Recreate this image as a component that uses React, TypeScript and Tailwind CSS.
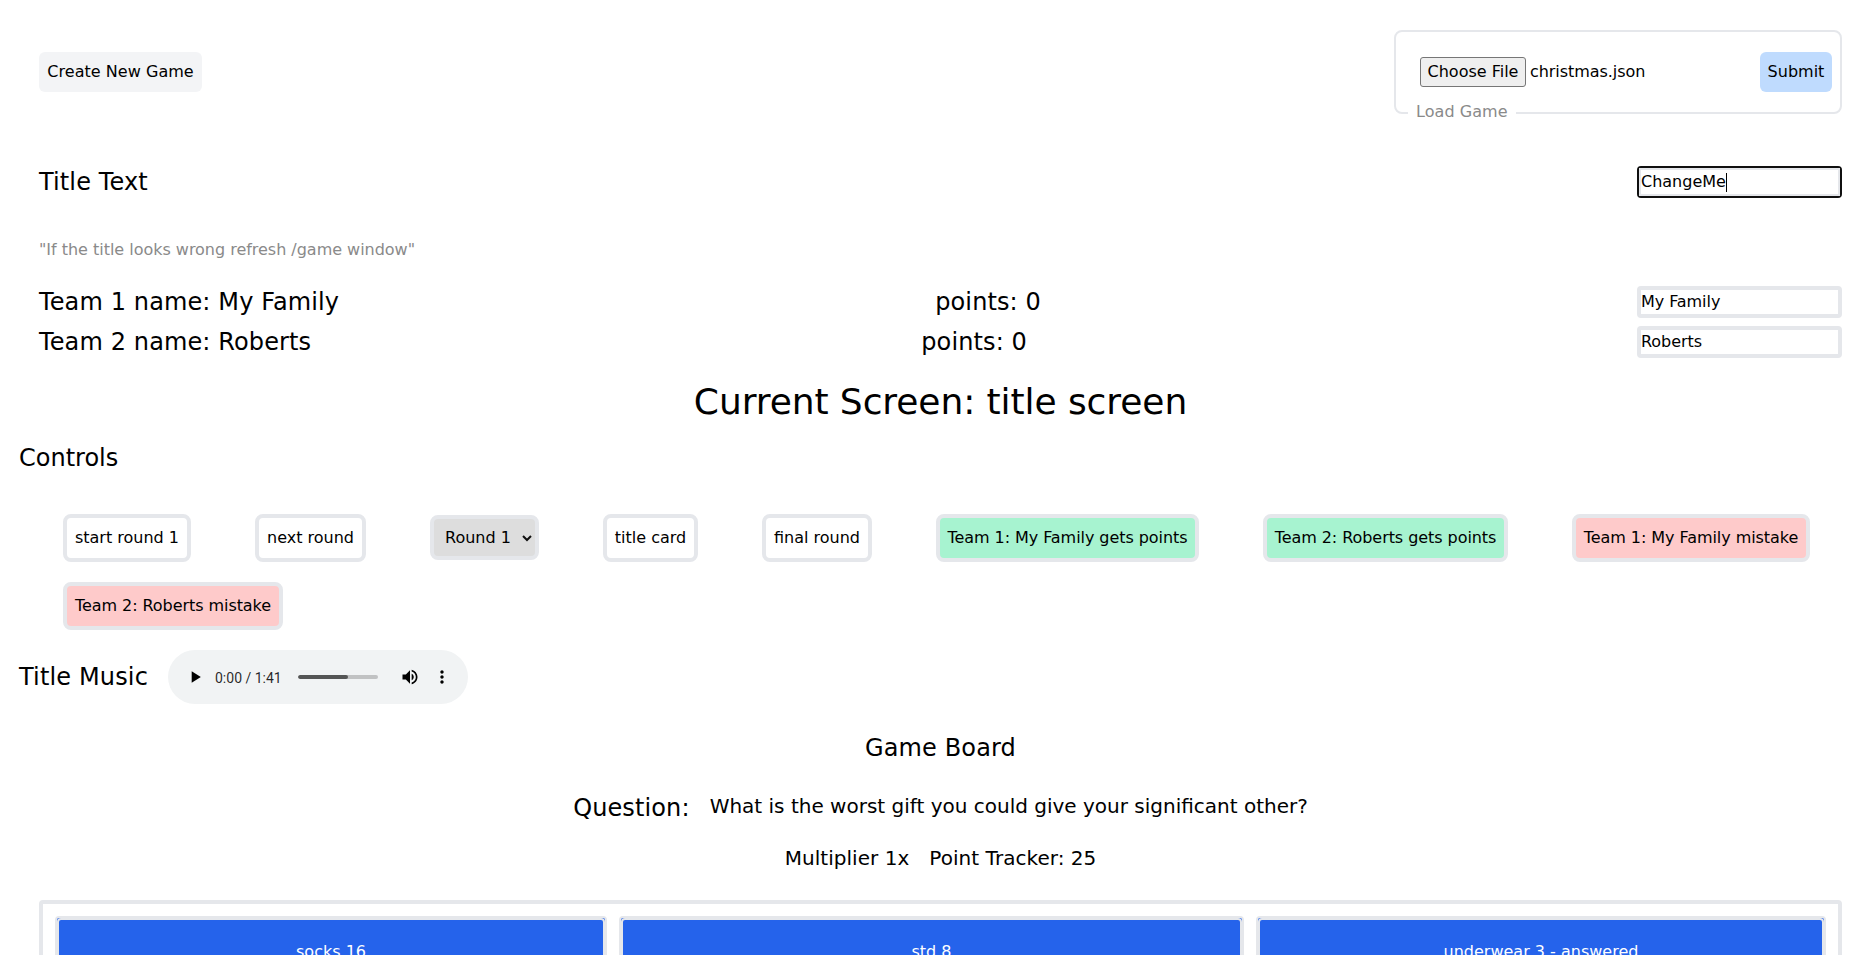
import React from "react";

const control = "rounded-lg border-4 border-[#e5e7eb] h-12 whitespace-nowrap";
const heading = "text-2xl tracking-[0.12px] whitespace-nowrap";

function PlayerBar() {
  return (
    <div className="flex h-[54px] w-[300px] items-center rounded-full bg-[#f1f3f4]">
      <svg className="ml-[17px] h-5 w-5 shrink-0" viewBox="0 0 24 24">
        <path d="M8 5v14l11-7z" fill="#000" />
      </svg>
      <span className="ml-[10px] w-[67px] whitespace-nowrap pt-px font-['Roboto',sans-serif] text-sm leading-5 text-black/85">0:00 / 1:41</span>
      <div className="ml-4 flex h-1 w-20 overflow-hidden rounded-full bg-[#c1c2c3]">
        <div className="h-1 w-[50px] rounded-full bg-[#545555]" />
      </div>
      <svg className="ml-[22px] h-5 w-5 shrink-0" viewBox="0 0 24 24">
        <path d="M3 9v6h4l5 5V4L7 9H3zm13.5 3c0-1.77-1.02-3.29-2.5-4.03v8.05c1.48-.73 2.5-2.25 2.5-4.02zM14 3.23v2.06c2.89.86 5 3.54 5 6.71s-2.11 5.85-5 6.71v2.06c4.01-.91 7-4.49 7-8.77s-2.99-7.86-7-8.77z" />
      </svg>
      <svg className="ml-3 h-5 w-5 shrink-0" viewBox="0 0 24 24">
        <path d="M12 8c1.1 0 2-.9 2-2s-.9-2-2-2-2 .9-2 2 .9 2 2 2zm0 2c-1.1 0-2 .9-2 2s.9 2 2 2 2-.9 2-2-.9-2-2-2zm0 6c-1.1 0-2 .9-2 2s.9 2 2 2 2-.9 2-2-.9-2-2-2z" />
      </svg>
    </div>
  );
}

function TeamRow({ n, name }: { n: number; name: string }) {
  return (
    <div className="flex h-8 items-center justify-between">
      <p className={heading}>Team {n} name: {name}</p>
      <p className={heading}>points: 0</p>
      <div className="flex h-8 w-[205px] items-center rounded border-4 border-[#e5e7eb] tracking-[-0.06px]">{name}</div>
    </div>
  );
}

function Answer({ label, width }: { label: string; width: string }) {
  return (
    <div className={`${width} h-[72px] rounded border-2 border-[#e5e7eb] bg-[#2563eb]`}>
      <div className="flex h-[68px] items-center justify-center rounded border-2 border-[#e5e7eb] bg-[#2563eb] text-white">{label}</div>
    </div>
  );
}

export default function App() {
  return (
    <div className="h-[955px] overflow-hidden bg-white font-['DejaVu_Sans',sans-serif] text-base text-black">
      <div className="ml-[19px] flex w-[1843px] flex-col">
        <div className="px-5 pt-[30px]">
          <div className="flex h-[84px] items-center justify-between">
            <button className="h-10 w-[163px] rounded-md bg-[#f3f4f6] whitespace-nowrap tracking-[0.04px]">Create New Game</button>
            <div className="relative flex h-[84px] w-[448px] items-center justify-between rounded-lg border-2 border-[#e5e7eb] pl-6 pr-2">
              <div className="flex items-center gap-1">
                <button className="h-[30px] w-[106px] rounded-[3px] border border-[#767676] bg-[#efefef] whitespace-nowrap leading-none">Choose File</button>
                <span className="tracking-[-0.06px]">christmas.json</span>
              </div>
              <button className="h-10 w-[72px] rounded-md bg-[#bfdbfe]">Submit</button>
              <span className="absolute left-3 top-[68px] bg-white px-2 leading-6 tracking-[0.06px] text-[#8a8a8a]">Load Game</span>
            </div>
          </div>
          <div className="mt-[52px] flex h-8 items-center justify-between">
            <p className={heading}>Title Text</p>
            <div className="flex h-8 w-[205px] items-center rounded border-2 border-[#101010]">
              <div className="flex h-7 w-full items-center border-2 border-[#e5e7eb]">
                ChangeMe<span className="h-[19px] w-px bg-black" />
              </div>
            </div>
          </div>
          <p className="mt-10 leading-6 tracking-[-0.02px] text-[#8a8a8a]">"If the title looks wrong refresh /game window"</p>
          <div className="mt-6 flex flex-col gap-2">
            <TeamRow n={1} name="My Family" />
            <TeamRow n={2} name="Roberts" />
          </div>
        </div>
        <p className="mt-6 text-center text-4xl leading-10 tracking-[-0.08px]">Current Screen: title screen</p>
        <p className="mt-5 text-2xl leading-8">Controls</p>
        <div className="ml-11 mt-10 flex flex-wrap gap-x-16 gap-y-5">
          <button className={`${control} w-32`}>start round 1</button>
          <button className={`${control} w-[111px]`}>next round</button>
          <button className="mt-px flex h-[45px] w-[109px] items-center rounded-lg border-4 border-[#e5e7eb] bg-[#dddddd] pl-[11px] whitespace-nowrap">
            Round 1
            <svg className="ml-[11px] h-[10px] w-[10px]" viewBox="0 0 10 10">
              <path d="M1 3l4 4 4-4" fill="none" stroke="#101010" strokeWidth="2" />
            </svg>
          </button>
          <button className={`${control} w-[95px]`}>title card</button>
          <button className={`${control} w-[110px]`}>final round</button>
          <button className={`${control} w-[263px] bg-[#a7f3d0] tracking-[-0.06px]`}>Team 1: My Family gets points</button>
          <button className={`${control} w-[245px] bg-[#a7f3d0] tracking-[-0.06px]`}>Team 2: Roberts gets points</button>
          <button className={`${control} w-[238px] bg-[#fecaca] tracking-[-0.06px]`}>Team 1: My Family mistake</button>
          <button className={`${control} w-[220px] bg-[#fecaca] tracking-[-0.06px]`}>Team 2: Roberts mistake</button>
        </div>
        <div className="mt-5 flex items-center">
          <p className="w-[149px] text-2xl tracking-[0.15px] whitespace-nowrap">Title Music</p>
          <PlayerBar />
        </div>
        <p className="mt-7 text-center text-2xl leading-8 tracking-[0.12px]">Game Board</p>
        <div className="mt-7 flex justify-center gap-5">
          <p className="text-2xl leading-8 tracking-[0.12px]">Question:</p>
          <p className="text-xl leading-7">What is the worst gift you could give your significant other?</p>
        </div>
        <div className="mt-5 flex justify-center gap-5 text-xl leading-7 tracking-[0.04px]">
          <p>Multiplier 1x</p>
          <p>Point Tracker: 25</p>
        </div>
        <div className="mx-5 mt-7 flex gap-3 rounded border-4 border-[#e5e7eb] p-3">
          <Answer label="socks 16" width="w-[552px]" />
          <Answer label="std 8" width="w-[625px]" />
          <Answer label="underwear 3 - answered" width="w-[570px]" />
        </div>
      </div>
    </div>
  );
}
